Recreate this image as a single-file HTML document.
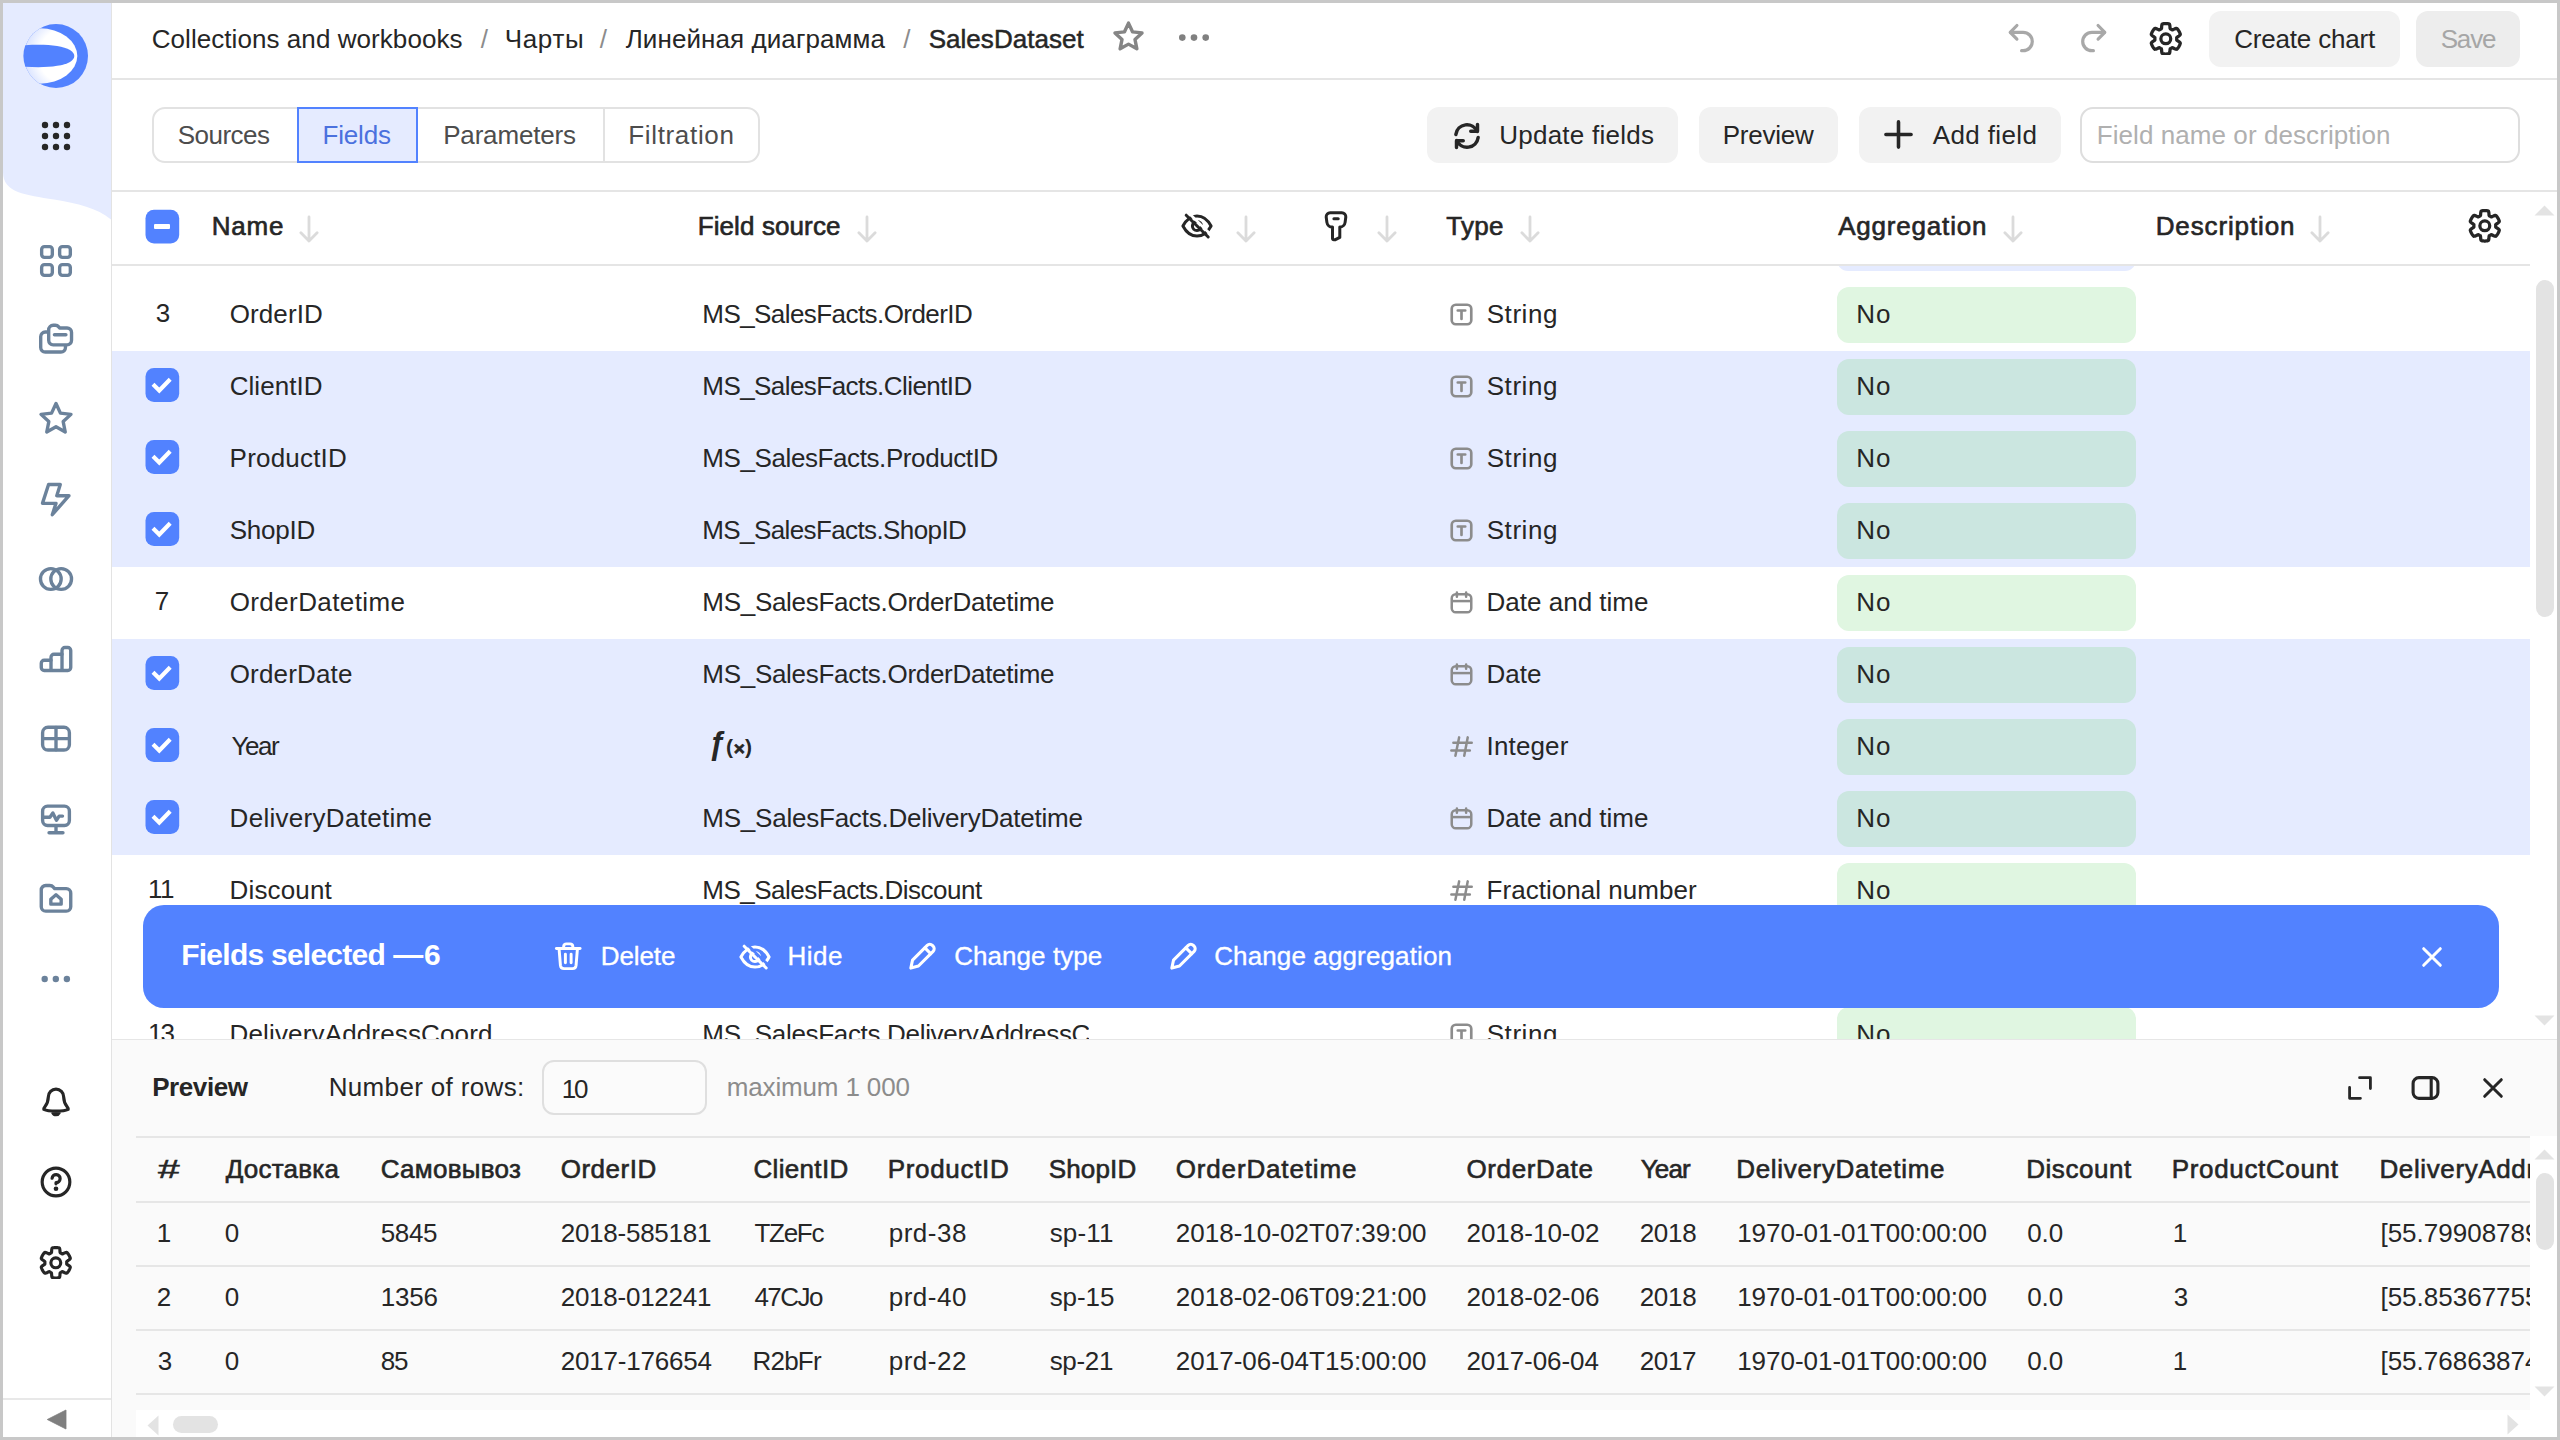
<!DOCTYPE html>
<html lang="en"><head><meta charset="utf-8"><title>SalesDataset</title>
<style>
html,body{margin:0;padding:0;background:#fff;}
body{width:2560px;height:1440px;position:relative;overflow:hidden;font-family:"Liberation Sans","Noto Sans CJK SC",sans-serif;}
#page{position:absolute;left:0;top:0;width:2560px;height:1440px;overflow:hidden;}
#page div,#page span.t{position:absolute;}
span.t{white-space:pre;}
#frame{position:absolute;left:0;top:0;width:2554px;height:1434px;border:3px solid #c8c8c8;pointer-events:none;}
#side{left:0;top:0;width:112px;height:1440px;}
</style></head><body><div id="page">
<div id="side">
<svg style="position:absolute;left:0;top:0" width="112" height="240" viewBox="0 0 112 240"><path d="M3 3 H111 V219.5 C97 208 78 203.5 54 199.5 C26 195 3 193 3 172 Z" fill="#e5ebff"/></svg>
<svg style="position:absolute;left:22px;top:22px" width="68" height="68" viewBox="22 22 68 68">
<defs><radialGradient id="lg" gradientUnits="userSpaceOnUse" cx="66" cy="56" r="44"><stop offset="0.62" stop-color="#ffffff"/><stop offset="1" stop-color="#d4dfff"/></radialGradient>
<clipPath id="lc"><circle cx="56" cy="56" r="32"/></clipPath></defs>
<circle cx="56" cy="56" r="32" fill="#5282ff"/>
<ellipse cx="40" cy="56" rx="37.3" ry="27.7" fill="url(#lg)" clip-path="url(#lc)"/>
<path d="M25.3 45.3 C45 44 62 45.5 70 50 C73 52 74.3 54 74.3 56 C74.3 58 73 60 70 62 C62 66.5 45 68 25.3 66.7 A32 32 0 0 1 25.3 45.3Z" fill="#5282ff"/>
</svg>
<svg style="position:absolute;left:0;top:0" width="112" height="160" fill="#262626"><circle cx="45" cy="125" r="3.2"/><circle cx="45" cy="136" r="3.2"/><circle cx="45" cy="147" r="3.2"/><circle cx="56" cy="125" r="3.2"/><circle cx="56" cy="136" r="3.2"/><circle cx="56" cy="147" r="3.2"/><circle cx="67" cy="125" r="3.2"/><circle cx="67" cy="136" r="3.2"/><circle cx="67" cy="147" r="3.2"/></svg>
<svg style="position:absolute;left:38px;top:242.5px" width="36" height="36" viewBox="0 0 16 16" fill="none" stroke="#6b829b" stroke-width="1.5" stroke-linecap="round" stroke-linejoin="round" ><rect x="1.62" y="1.62" width="4.75" height="4.75" rx="1.25"/><rect x="1.62" y="9.62" width="4.75" height="4.75" rx="1.25"/><rect x="9.62" y="1.62" width="4.75" height="4.75" rx="1.25"/><rect x="9.62" y="9.62" width="4.75" height="4.75" rx="1.25"/></svg>
<svg style="position:absolute;left:38px;top:321px" width="36" height="36" viewBox="0 0 16 16" fill="none" stroke="#6b829b" stroke-width="1.5" stroke-linecap="round" stroke-linejoin="round" ><path d="M4.75 4.3 V3.9 A2 2 0 0 1 6.75 1.9 H7.7 C8.4 1.9 8.8 2.1 9.2 2.6 L9.6 3.1 H12.9 A2 2 0 0 1 14.9 5.1 V8.6 A2 2 0 0 1 12.9 10.6 H6.75 A2 2 0 0 1 4.75 8.6 Z"/><path d="M4.4 4.9 H3.2 A2 2 0 0 0 1.2 6.9 V11.8 A2 2 0 0 0 3.2 13.8 H10.2 A2 2 0 0 0 12.2 11.8 V11"/><path d="M7.3 6.1 H12.4"/></svg>
<svg style="position:absolute;left:38px;top:400px" width="36" height="36" viewBox="0 0 16 16" fill="none" stroke="#6b829b" stroke-width="1.5" stroke-linecap="round" stroke-linejoin="round" ><path d="M8.00,1.55 L9.97,5.84 L14.66,6.39 L11.19,9.59 L12.11,14.21 L8.00,11.90 L3.89,14.21 L4.81,9.59 L1.34,6.39 L6.03,5.84Z"/></svg>
<svg style="position:absolute;left:38px;top:480.5px" width="36" height="36" viewBox="0 0 16 16" fill="none" stroke="#6b829b" stroke-width="1.5" stroke-linecap="round" stroke-linejoin="round" ><path d="M4.7 1.58 H9.9 L8.35 6.55 H13.78 L6.35 14.97 L8 9.94 H1.98 Z"/></svg>
<svg style="position:absolute;left:38px;top:561px" width="36" height="36" viewBox="0 0 16 16" fill="none" stroke="#6b829b" stroke-width="1.5" stroke-linecap="round" stroke-linejoin="round" ><circle cx="5.7" cy="8" r="4.6"/><circle cx="10.3" cy="8" r="4.6"/></svg>
<svg style="position:absolute;left:38px;top:641px" width="36" height="36" viewBox="0 0 16 16" fill="none" stroke="#6b829b" stroke-width="1.5" stroke-linecap="round" stroke-linejoin="round" ><path d="M1.45 9.85 A1.3 1.3 0 0 1 2.75 8.55 H5.78 V7.2 A1.3 1.3 0 0 1 7.08 5.9 H10.67 V4.2 A1.3 1.3 0 0 1 11.97 2.9 H13.25 A1.3 1.3 0 0 1 14.55 4.2 V11.8 A1.3 1.3 0 0 1 13.25 13.1 H2.75 A1.3 1.3 0 0 1 1.45 11.8 Z"/><path d="M5.78 8.55 V13 M10.67 5.9 V13"/></svg>
<svg style="position:absolute;left:38px;top:721px" width="36" height="36" viewBox="0 0 16 16" fill="none" stroke="#6b829b" stroke-width="1.5" stroke-linecap="round" stroke-linejoin="round" ><rect x="2.05" y="2.8" width="11.9" height="10.1" rx="2.4"/><path d="M8 2.9 V12.8 M2.2 7.85 H13.8"/></svg>
<svg style="position:absolute;left:38px;top:801px" width="36" height="36" viewBox="0 0 16 16" fill="none" stroke="#6b829b" stroke-width="1.5" stroke-linecap="round" stroke-linejoin="round" ><rect x="2.05" y="2.3" width="11.9" height="8.6" rx="2.2"/><path d="M8 11 V14 M4.9 14.1 H11.1"/><path d="M2.3 7.2 H5.3 L6.6 5.3 L8.2 8.6 L9.4 6.7 H10.9"/></svg>
<svg style="position:absolute;left:38px;top:880.5px" width="36" height="36" viewBox="0 0 16 16" fill="none" stroke="#6b829b" stroke-width="1.5" stroke-linecap="round" stroke-linejoin="round" ><path d="M1.45 4 A2 2 0 0 1 3.45 2 H5.2 C5.9 2 6.4 2.2 6.8 2.7 L7.4 3.4 H12.55 A2 2 0 0 1 14.55 5.4 V11.4 A2 2 0 0 1 12.55 13.4 H3.45 A2 2 0 0 1 1.45 11.4 Z"/><path d="M5.7 10.3 V8.1 L8 6.1 L10.3 8.1 V10.3 Z"/></svg>
<svg style="position:absolute;left:38px;top:961px" width="36" height="36" viewBox="0 0 36 36" fill="#6b829b"><circle cx="6.7" cy="18" r="3.2"/><circle cx="17.8" cy="18" r="3.2"/><circle cx="28.9" cy="18" r="3.2"/></svg>
<svg style="position:absolute;left:38px;top:1084px" width="36" height="36" viewBox="0 0 16 16" fill="none" stroke="#262626" stroke-width="1.4" stroke-linecap="round" stroke-linejoin="round" color="#262626"><path d="M2.6 11.3 C2.5 10.8 2.8 10.4 3.2 9.9 C4.3 8.5 4.5 7.5 4.6 5.7 A3.4 3.4 0 0 1 11.4 5.7 C11.5 7.5 11.7 8.5 12.8 9.9 C13.2 10.4 13.5 10.8 13.4 11.3 C11.4 12.3 4.6 12.3 2.6 11.3Z"/><path d="M6.3 12.9 A1.9 1.9 0 0 0 9.7 12.9Z" fill="currentColor" stroke-width="0.8"/></svg>
<svg style="position:absolute;left:38px;top:1164.4px" width="36" height="36" viewBox="0 0 16 16" fill="none" stroke="#262626" stroke-width="1.4" stroke-linecap="round" stroke-linejoin="round" color="#262626"><circle cx="8" cy="8" r="6.15"/><path d="M6.25 6.35 A1.8 1.8 0 1 1 8 8.3 V8.8"/><circle cx="8" cy="11" r="0.6" fill="currentColor" stroke-width="0.9"/></svg>
<svg style="position:absolute;left:39.2px;top:1245.7px" width="33.6" height="33.6" viewBox="0 0 16 16" fill="none" stroke="#262626" stroke-width="1.5" stroke-linecap="round" stroke-linejoin="round" ><path d="M8.00,0.75 L8.25,0.75 L8.51,0.77 L8.76,0.79 L9.01,0.82 L9.26,0.86 L9.51,0.91 L9.74,1.04 L9.89,1.42 L9.96,1.95 L9.99,2.52 L10.03,2.98 L10.12,3.24 L10.28,3.33 L10.44,3.41 L10.60,3.50 L10.76,3.59 L10.91,3.69 L11.06,3.79 L11.33,3.74 L11.75,3.53 L12.25,3.27 L12.76,3.07 L13.16,3.02 L13.39,3.15 L13.55,3.34 L13.71,3.54 L13.87,3.74 L14.01,3.95 L14.15,4.16 L14.28,4.38 L14.40,4.60 L14.52,4.82 L14.62,5.05 L14.72,5.28 L14.81,5.52 L14.90,5.76 L14.89,6.02 L14.65,6.34 L14.22,6.68 L13.74,6.99 L13.36,7.25 L13.18,7.46 L13.19,7.64 L13.20,7.82 L13.20,8.00 L13.20,8.18 L13.19,8.36 L13.18,8.54 L13.36,8.75 L13.74,9.01 L14.22,9.32 L14.65,9.66 L14.89,9.98 L14.90,10.24 L14.81,10.48 L14.72,10.72 L14.62,10.95 L14.52,11.18 L14.40,11.40 L14.28,11.62 L14.15,11.84 L14.01,12.05 L13.87,12.26 L13.71,12.46 L13.55,12.66 L13.39,12.85 L13.16,12.98 L12.76,12.93 L12.25,12.73 L11.75,12.47 L11.33,12.26 L11.06,12.21 L10.91,12.31 L10.76,12.41 L10.60,12.50 L10.44,12.59 L10.28,12.67 L10.12,12.76 L10.03,13.02 L9.99,13.48 L9.96,14.05 L9.89,14.58 L9.74,14.96 L9.51,15.09 L9.26,15.14 L9.01,15.18 L8.76,15.21 L8.51,15.23 L8.25,15.25 L8.00,15.25 L7.75,15.25 L7.49,15.23 L7.24,15.21 L6.99,15.18 L6.74,15.14 L6.49,15.09 L6.26,14.96 L6.11,14.58 L6.04,14.05 L6.01,13.48 L5.97,13.02 L5.88,12.76 L5.72,12.67 L5.56,12.59 L5.40,12.50 L5.24,12.41 L5.09,12.31 L4.94,12.21 L4.67,12.26 L4.25,12.47 L3.75,12.73 L3.24,12.93 L2.84,12.98 L2.61,12.85 L2.45,12.66 L2.29,12.46 L2.13,12.26 L1.99,12.05 L1.85,11.84 L1.72,11.62 L1.60,11.40 L1.48,11.18 L1.38,10.95 L1.28,10.72 L1.19,10.48 L1.10,10.24 L1.11,9.98 L1.35,9.66 L1.78,9.32 L2.26,9.01 L2.64,8.75 L2.82,8.54 L2.81,8.36 L2.80,8.18 L2.80,8.00 L2.80,7.82 L2.81,7.64 L2.82,7.46 L2.64,7.25 L2.26,6.99 L1.78,6.68 L1.35,6.34 L1.11,6.02 L1.10,5.76 L1.19,5.52 L1.28,5.28 L1.38,5.05 L1.48,4.82 L1.60,4.60 L1.72,4.37 L1.85,4.16 L1.99,3.95 L2.13,3.74 L2.29,3.54 L2.45,3.34 L2.61,3.15 L2.84,3.02 L3.24,3.07 L3.75,3.27 L4.25,3.53 L4.67,3.74 L4.94,3.79 L5.09,3.69 L5.24,3.59 L5.40,3.50 L5.56,3.41 L5.72,3.33 L5.88,3.24 L5.97,2.98 L6.01,2.52 L6.04,1.95 L6.11,1.42 L6.26,1.04 L6.49,0.91 L6.74,0.86 L6.99,0.82 L7.24,0.79 L7.49,0.77 L7.75,0.75Z"/><circle cx="8" cy="8" r="2.35"/></svg>
<div style="left:3px;top:1398px;width:108px;height:2px;background:#e8e8e8;"></div>
<svg style="position:absolute;left:46px;top:1408px" width="22" height="24" viewBox="46 1408 22 24"><path d="M66 1410 V1429 L47.3 1419.5 Z" fill="#7f7f7f" stroke="#7f7f7f" stroke-width="0.8" stroke-linejoin="round"/></svg>
</div>
<div style="left:110.5px;top:3px;width:1.5px;height:1434px;background:rgba(0,0,0,0.11);"></div>
<span class="t" style="left:151.70px;top:25.99px;font-size:26px;line-height:26px;color:#262626;letter-spacing:0.064px;">Collections and workbooks</span>
<span class="t" style="left:480.70px;top:25.99px;font-size:26px;line-height:26px;color:#8c8c8c;">/</span>
<span class="t" style="left:504.70px;top:25.99px;font-size:26px;line-height:26px;color:#262626;letter-spacing:0.679px;">Чарты</span>
<span class="t" style="left:599.70px;top:25.99px;font-size:26px;line-height:26px;color:#8c8c8c;">/</span>
<span class="t" style="left:625.70px;top:25.99px;font-size:26px;line-height:26px;color:#262626;letter-spacing:0.085px;">Линейная диаграмма</span>
<span class="t" style="left:903.20px;top:25.99px;font-size:26px;line-height:26px;color:#8c8c8c;">/</span>
<span class="t" style="left:928.70px;top:25.99px;font-size:26px;line-height:26px;color:#262626;letter-spacing:0.035px;-webkit-text-stroke:0.5px #262626;">SalesDataset</span>
<svg style="position:absolute;left:1111.5px;top:19.5px" width="33" height="33" viewBox="0 0 16 16" fill="none" stroke="#858585" stroke-width="1.65" stroke-linecap="round" stroke-linejoin="round" ><path d="M8.00,1.50 L9.94,5.73 L14.56,6.27 L11.14,9.42 L12.06,13.98 L8.00,11.70 L3.94,13.98 L4.86,9.42 L1.44,6.27 L6.06,5.73Z"/></svg>
<svg style="position:absolute;left:1177px;top:30px" width="36" height="16" fill="#808080"><circle cx="5.3" cy="7.6" r="3.3"/><circle cx="17" cy="7.6" r="3.3"/><circle cx="28.7" cy="7.6" r="3.3"/></svg>
<svg style="position:absolute;left:2005px;top:22px" width="32" height="32" viewBox="0 0 16 16" fill="none" stroke="#a8a8a8" stroke-width="1.6" stroke-linecap="round" stroke-linejoin="round" ><path d="M5.95 1.75 L2.6 5.15 L5.95 8.55"/><path d="M2.8 5.15 H9.05 a4.6 4.6 0 0 1 0 9.2 H8.3"/></svg>
<svg style="position:absolute;left:2077.5px;top:22px" width="32" height="32" viewBox="0 0 16 16" fill="none" stroke="#a8a8a8" stroke-width="1.6" stroke-linecap="round" stroke-linejoin="round" ><path d="M10.05 1.75 L13.4 5.15 L10.05 8.55"/><path d="M13.2 5.15 H6.95 a4.6 4.6 0 0 0 0 9.2 H7.7"/></svg>
<svg style="position:absolute;left:2148.5px;top:21.9px" width="33.6" height="33.6" viewBox="0 0 16 16" fill="none" stroke="#262626" stroke-width="1.55" stroke-linecap="round" stroke-linejoin="round" ><path d="M8.00,0.75 L8.25,0.75 L8.51,0.77 L8.76,0.79 L9.01,0.82 L9.26,0.86 L9.51,0.91 L9.74,1.04 L9.89,1.42 L9.96,1.95 L9.99,2.52 L10.03,2.98 L10.12,3.24 L10.28,3.33 L10.44,3.41 L10.60,3.50 L10.76,3.59 L10.91,3.69 L11.06,3.79 L11.33,3.74 L11.75,3.53 L12.25,3.27 L12.76,3.07 L13.16,3.02 L13.39,3.15 L13.55,3.34 L13.71,3.54 L13.87,3.74 L14.01,3.95 L14.15,4.16 L14.28,4.38 L14.40,4.60 L14.52,4.82 L14.62,5.05 L14.72,5.28 L14.81,5.52 L14.90,5.76 L14.89,6.02 L14.65,6.34 L14.22,6.68 L13.74,6.99 L13.36,7.25 L13.18,7.46 L13.19,7.64 L13.20,7.82 L13.20,8.00 L13.20,8.18 L13.19,8.36 L13.18,8.54 L13.36,8.75 L13.74,9.01 L14.22,9.32 L14.65,9.66 L14.89,9.98 L14.90,10.24 L14.81,10.48 L14.72,10.72 L14.62,10.95 L14.52,11.18 L14.40,11.40 L14.28,11.62 L14.15,11.84 L14.01,12.05 L13.87,12.26 L13.71,12.46 L13.55,12.66 L13.39,12.85 L13.16,12.98 L12.76,12.93 L12.25,12.73 L11.75,12.47 L11.33,12.26 L11.06,12.21 L10.91,12.31 L10.76,12.41 L10.60,12.50 L10.44,12.59 L10.28,12.67 L10.12,12.76 L10.03,13.02 L9.99,13.48 L9.96,14.05 L9.89,14.58 L9.74,14.96 L9.51,15.09 L9.26,15.14 L9.01,15.18 L8.76,15.21 L8.51,15.23 L8.25,15.25 L8.00,15.25 L7.75,15.25 L7.49,15.23 L7.24,15.21 L6.99,15.18 L6.74,15.14 L6.49,15.09 L6.26,14.96 L6.11,14.58 L6.04,14.05 L6.01,13.48 L5.97,13.02 L5.88,12.76 L5.72,12.67 L5.56,12.59 L5.40,12.50 L5.24,12.41 L5.09,12.31 L4.94,12.21 L4.67,12.26 L4.25,12.47 L3.75,12.73 L3.24,12.93 L2.84,12.98 L2.61,12.85 L2.45,12.66 L2.29,12.46 L2.13,12.26 L1.99,12.05 L1.85,11.84 L1.72,11.62 L1.60,11.40 L1.48,11.18 L1.38,10.95 L1.28,10.72 L1.19,10.48 L1.10,10.24 L1.11,9.98 L1.35,9.66 L1.78,9.32 L2.26,9.01 L2.64,8.75 L2.82,8.54 L2.81,8.36 L2.80,8.18 L2.80,8.00 L2.80,7.82 L2.81,7.64 L2.82,7.46 L2.64,7.25 L2.26,6.99 L1.78,6.68 L1.35,6.34 L1.11,6.02 L1.10,5.76 L1.19,5.52 L1.28,5.28 L1.38,5.05 L1.48,4.82 L1.60,4.60 L1.72,4.37 L1.85,4.16 L1.99,3.95 L2.13,3.74 L2.29,3.54 L2.45,3.34 L2.61,3.15 L2.84,3.02 L3.24,3.07 L3.75,3.27 L4.25,3.53 L4.67,3.74 L4.94,3.79 L5.09,3.69 L5.24,3.59 L5.40,3.50 L5.56,3.41 L5.72,3.33 L5.88,3.24 L5.97,2.98 L6.01,2.52 L6.04,1.95 L6.11,1.42 L6.26,1.04 L6.49,0.91 L6.74,0.86 L6.99,0.82 L7.24,0.79 L7.49,0.77 L7.75,0.75Z"/><circle cx="8" cy="8" r="2.35"/></svg>
<div style="left:2209px;top:11px;width:191px;height:56px;background:#f2f2f2;border-radius:12px;"></div>
<span class="t" style="left:2234.20px;top:25.99px;font-size:26px;line-height:26px;color:#262626;letter-spacing:-0.185px;">Create chart</span>
<div style="left:2416px;top:11px;width:104px;height:56px;background:#ededed;border-radius:12px;"></div>
<span class="t" style="left:2440.70px;top:25.99px;font-size:26px;line-height:26px;color:#a6a6a6;letter-spacing:-1.167px;">Save</span>
<div style="left:112px;top:78px;width:2445px;height:2px;background:#e5e5e5;"></div>
<div style="left:152px;top:107px;width:608px;height:56px;border:2px solid #e2e2e2;border-radius:13px;box-sizing:border-box"></div>
<div style="left:416px;top:109px;width:2px;height:52px;background:#e2e2e2;"></div>
<div style="left:603px;top:109px;width:2px;height:52px;background:#e2e2e2;"></div>
<div style="left:297px;top:107px;width:121px;height:56px;border:2px solid #5282ff;background:#e5ebff;box-sizing:border-box"></div>
<span class="t" style="left:177.70px;top:121.99px;font-size:26px;line-height:26px;color:#4d4d4d;letter-spacing:-0.513px;">Sources</span>
<span class="t" style="left:322.45px;top:121.99px;font-size:26px;line-height:26px;color:#4b71de;letter-spacing:-0.161px;">Fields</span>
<span class="t" style="left:443.20px;top:121.99px;font-size:26px;line-height:26px;color:#4d4d4d;letter-spacing:-0.176px;">Parameters</span>
<span class="t" style="left:628.20px;top:121.99px;font-size:26px;line-height:26px;color:#4d4d4d;letter-spacing:0.674px;">Filtration</span>
<div style="left:1427px;top:107px;width:251px;height:56px;background:#f2f2f2;border-radius:12px;"></div>
<svg style="position:absolute;left:1452.1px;top:120.8px" width="30" height="30" viewBox="0 0 16 16" fill="none" stroke="#262626" stroke-width="1.85" stroke-linecap="round" stroke-linejoin="round" ><path d="M2.05 7.2 A6 6 0 0 1 13.5 5.6"/><path d="M13.6 1.9 V5.5 H10"/><path d="M13.95 8.8 A6 6 0 0 1 2.5 10.4"/><path d="M2.4 14.1 V10.5 H6"/></svg>
<span class="t" style="left:1499.20px;top:121.99px;font-size:26px;line-height:26px;color:#262626;letter-spacing:0.253px;">Update fields</span>
<div style="left:1699px;top:107px;width:139px;height:56px;background:#f2f2f2;border-radius:12px;"></div>
<span class="t" style="left:1722.70px;top:121.99px;font-size:26px;line-height:26px;color:#262626;letter-spacing:-0.233px;">Preview</span>
<div style="left:1859px;top:107px;width:202px;height:56px;background:#f2f2f2;border-radius:12px;"></div>
<svg style="position:absolute;left:1882.5px;top:119.1px" width="31" height="31" viewBox="0 0 16 16" fill="none" stroke="#262626" stroke-width="1.85" stroke-linecap="round" stroke-linejoin="round" ><path d="M8 1.5 V14.5 M1.5 8 H14.5"/></svg>
<span class="t" style="left:1932.70px;top:121.99px;font-size:26px;line-height:26px;color:#262626;letter-spacing:0.385px;">Add field</span>
<div style="left:2080px;top:107px;width:440px;height:56px;border:2px solid #dedede;border-radius:13px;box-sizing:border-box"></div>
<span class="t" style="left:2096.70px;top:121.99px;font-size:26px;line-height:26px;color:#b0b0b0;letter-spacing:0.077px;">Field name or description</span>
<div style="left:112px;top:190px;width:2445px;height:2px;background:#e5e5e5;"></div>
<svg style="position:absolute;left:145px;top:208px" width="36" height="36" viewBox="0 0 36 36"><rect x="0.5" y="1.7" width="33.7" height="33.8" rx="8.5" fill="#5282ff"/></svg>
<div style="left:154px;top:223.5px;width:16px;height:5px;background:#fff;border-radius:1px;"></div>
<span class="t" style="left:211.70px;top:212.99px;font-size:26px;line-height:26px;color:#262626;letter-spacing:0.802px;-webkit-text-stroke:0.65px #262626;">Name</span>
<svg style="position:absolute;left:299px;top:215px" width="20" height="29" viewBox="0 0 20 29" fill="none" stroke="#dbdbdb" stroke-width="2.8" stroke-linecap="round" stroke-linejoin="round"><path d="M10 2 V26 M1.9 17.8 L10 26 L18.1 17.8"/></svg>
<span class="t" style="left:697.70px;top:212.99px;font-size:26px;line-height:26px;color:#262626;letter-spacing:0.104px;-webkit-text-stroke:0.65px #262626;">Field source</span>
<svg style="position:absolute;left:857px;top:215px" width="20" height="29" viewBox="0 0 20 29" fill="none" stroke="#dbdbdb" stroke-width="2.8" stroke-linecap="round" stroke-linejoin="round"><path d="M10 2 V26 M1.9 17.8 L10 26 L18.1 17.8"/></svg>
<svg style="position:absolute;left:1180.5px;top:209.7px" width="32" height="32" viewBox="0 0 16 16" fill="none" stroke="#262626" stroke-width="1.5" stroke-linecap="round" stroke-linejoin="round" ><path d="M0.95 8 C2.7 4.7 5.2 2.95 8 2.95 C10.8 2.95 13.3 4.7 15.05 8 C13.3 11.3 10.8 13.05 8 13.05 C5.2 13.05 2.7 11.3 0.95 8Z"/><circle cx="8" cy="8" r="2.3"/><path d="M4.0 1.6 L15.0 12.4" stroke="#fff" stroke-width="1.35" stroke-linecap="butt"/><path d="M2.6 2.6 L13.6 13.5"/></svg>
<svg style="position:absolute;left:1236px;top:215px" width="20" height="29" viewBox="0 0 20 29" fill="none" stroke="#dbdbdb" stroke-width="2.8" stroke-linecap="round" stroke-linejoin="round"><path d="M10 2 V26 M1.9 17.8 L10 26 L18.1 17.8"/></svg>
<svg style="position:absolute;left:1320px;top:209.5px" width="32" height="32" viewBox="0 0 16 16" fill="none" stroke="#262626" stroke-width="1.5" stroke-linecap="round" stroke-linejoin="round" ><path d="M5.1 1.35 H10.9 A2 2 0 0 1 12.9 3.5 L12.55 6.2 A2.7 2.7 0 0 1 9.9 8.55 V13.7 L7.7 14.85 H6.9 A0.65 0.65 0 0 1 6.25 14.2 V8.55 A2.7 2.7 0 0 1 3.45 6.2 L3.1 3.5 A2 2 0 0 1 5.1 1.35Z"/><path d="M6.95 4.35 H9.1"/></svg>
<svg style="position:absolute;left:1377px;top:215px" width="20" height="29" viewBox="0 0 20 29" fill="none" stroke="#dbdbdb" stroke-width="2.8" stroke-linecap="round" stroke-linejoin="round"><path d="M10 2 V26 M1.9 17.8 L10 26 L18.1 17.8"/></svg>
<span class="t" style="left:1446.20px;top:212.99px;font-size:26px;line-height:26px;color:#262626;letter-spacing:0.298px;-webkit-text-stroke:0.65px #262626;">Type</span>
<svg style="position:absolute;left:1519.5px;top:215px" width="20" height="29" viewBox="0 0 20 29" fill="none" stroke="#dbdbdb" stroke-width="2.8" stroke-linecap="round" stroke-linejoin="round"><path d="M10 2 V26 M1.9 17.8 L10 26 L18.1 17.8"/></svg>
<span class="t" style="left:1838.20px;top:212.99px;font-size:26px;line-height:26px;color:#262626;letter-spacing:0.804px;-webkit-text-stroke:0.65px #262626;">Aggregation</span>
<svg style="position:absolute;left:2003px;top:215px" width="20" height="29" viewBox="0 0 20 29" fill="none" stroke="#dbdbdb" stroke-width="2.8" stroke-linecap="round" stroke-linejoin="round"><path d="M10 2 V26 M1.9 17.8 L10 26 L18.1 17.8"/></svg>
<span class="t" style="left:2155.70px;top:212.99px;font-size:26px;line-height:26px;color:#262626;letter-spacing:0.871px;-webkit-text-stroke:0.65px #262626;">Description</span>
<svg style="position:absolute;left:2310px;top:215px" width="20" height="29" viewBox="0 0 20 29" fill="none" stroke="#dbdbdb" stroke-width="2.8" stroke-linecap="round" stroke-linejoin="round"><path d="M10 2 V26 M1.9 17.8 L10 26 L18.1 17.8"/></svg>
<svg style="position:absolute;left:2468.2px;top:209.45px" width="33.6" height="33.6" viewBox="0 0 16 16" fill="none" stroke="#262626" stroke-width="1.55" stroke-linecap="round" stroke-linejoin="round" ><path d="M8.00,0.75 L8.25,0.75 L8.51,0.77 L8.76,0.79 L9.01,0.82 L9.26,0.86 L9.51,0.91 L9.74,1.04 L9.89,1.42 L9.96,1.95 L9.99,2.52 L10.03,2.98 L10.12,3.24 L10.28,3.33 L10.44,3.41 L10.60,3.50 L10.76,3.59 L10.91,3.69 L11.06,3.79 L11.33,3.74 L11.75,3.53 L12.25,3.27 L12.76,3.07 L13.16,3.02 L13.39,3.15 L13.55,3.34 L13.71,3.54 L13.87,3.74 L14.01,3.95 L14.15,4.16 L14.28,4.38 L14.40,4.60 L14.52,4.82 L14.62,5.05 L14.72,5.28 L14.81,5.52 L14.90,5.76 L14.89,6.02 L14.65,6.34 L14.22,6.68 L13.74,6.99 L13.36,7.25 L13.18,7.46 L13.19,7.64 L13.20,7.82 L13.20,8.00 L13.20,8.18 L13.19,8.36 L13.18,8.54 L13.36,8.75 L13.74,9.01 L14.22,9.32 L14.65,9.66 L14.89,9.98 L14.90,10.24 L14.81,10.48 L14.72,10.72 L14.62,10.95 L14.52,11.18 L14.40,11.40 L14.28,11.62 L14.15,11.84 L14.01,12.05 L13.87,12.26 L13.71,12.46 L13.55,12.66 L13.39,12.85 L13.16,12.98 L12.76,12.93 L12.25,12.73 L11.75,12.47 L11.33,12.26 L11.06,12.21 L10.91,12.31 L10.76,12.41 L10.60,12.50 L10.44,12.59 L10.28,12.67 L10.12,12.76 L10.03,13.02 L9.99,13.48 L9.96,14.05 L9.89,14.58 L9.74,14.96 L9.51,15.09 L9.26,15.14 L9.01,15.18 L8.76,15.21 L8.51,15.23 L8.25,15.25 L8.00,15.25 L7.75,15.25 L7.49,15.23 L7.24,15.21 L6.99,15.18 L6.74,15.14 L6.49,15.09 L6.26,14.96 L6.11,14.58 L6.04,14.05 L6.01,13.48 L5.97,13.02 L5.88,12.76 L5.72,12.67 L5.56,12.59 L5.40,12.50 L5.24,12.41 L5.09,12.31 L4.94,12.21 L4.67,12.26 L4.25,12.47 L3.75,12.73 L3.24,12.93 L2.84,12.98 L2.61,12.85 L2.45,12.66 L2.29,12.46 L2.13,12.26 L1.99,12.05 L1.85,11.84 L1.72,11.62 L1.60,11.40 L1.48,11.18 L1.38,10.95 L1.28,10.72 L1.19,10.48 L1.10,10.24 L1.11,9.98 L1.35,9.66 L1.78,9.32 L2.26,9.01 L2.64,8.75 L2.82,8.54 L2.81,8.36 L2.80,8.18 L2.80,8.00 L2.80,7.82 L2.81,7.64 L2.82,7.46 L2.64,7.25 L2.26,6.99 L1.78,6.68 L1.35,6.34 L1.11,6.02 L1.10,5.76 L1.19,5.52 L1.28,5.28 L1.38,5.05 L1.48,4.82 L1.60,4.60 L1.72,4.37 L1.85,4.16 L1.99,3.95 L2.13,3.74 L2.29,3.54 L2.45,3.34 L2.61,3.15 L2.84,3.02 L3.24,3.07 L3.75,3.27 L4.25,3.53 L4.67,3.74 L4.94,3.79 L5.09,3.69 L5.24,3.59 L5.40,3.50 L5.56,3.41 L5.72,3.33 L5.88,3.24 L5.97,2.98 L6.01,2.52 L6.04,1.95 L6.11,1.42 L6.26,1.04 L6.49,0.91 L6.74,0.86 L6.99,0.82 L7.24,0.79 L7.49,0.77 L7.75,0.75Z"/><circle cx="8" cy="8" r="2.35"/></svg>
<div id="tbody" style="left:112px;top:266px;width:2418px;height:773px;overflow:hidden">
<div style="left:1725px;top:-51px;width:299px;height:55.5px;background:#e5ebff;border-radius:11px;"></div>
<span class="t" style="left:43.70px;top:33.99px;font-size:26px;line-height:26px;color:#262626;">3</span>
<span class="t" style="left:117.70px;top:34.99px;font-size:26px;line-height:26px;color:#262626;letter-spacing:0.103px;">OrderID</span>
<span class="t" style="left:590.30px;top:34.99px;font-size:26px;line-height:26px;color:#262626;letter-spacing:-0.564px;">MS_SalesFacts.OrderID</span>
<svg style="position:absolute;left:1337.1px;top:35.60000000000002px" width="25" height="25" viewBox="0 0 16 16" fill="none" stroke="#8c8c8c" stroke-width="1.7" stroke-linecap="round" stroke-linejoin="round" ><rect x="1.75" y="1.75" width="12.5" height="12.5" rx="2.6"/><path d="M5.6 5.45 H10.4 M8 5.6 V10.9"/></svg>
<span class="t" style="left:1374.70px;top:34.99px;font-size:26px;line-height:26px;color:#262626;letter-spacing:0.568px;">String</span>
<div style="left:1725px;top:21px;width:299px;height:55.5px;background:#e0f6e1;border-radius:12px;"></div>
<span class="t" style="left:1744.20px;top:34.99px;font-size:26px;line-height:26px;color:#262626;letter-spacing:1.024px;">No</span>
<div style="left:0px;top:85px;width:2418px;height:72px;background:#e5ebff;"></div>
<svg style="position:absolute;left:33px;top:101px" width="36" height="36" viewBox="0 0 36 36"><rect x="0.5" y="1.1" width="33.7" height="34" rx="8.5" fill="#5282ff"/><path d="M8 17.2 L14.3 23.5 L25.2 12.3" fill="none" stroke="#fff" stroke-width="4.1" stroke-linecap="butt" stroke-linejoin="miter"/></svg>
<span class="t" style="left:117.70px;top:106.99px;font-size:26px;line-height:26px;color:#262626;letter-spacing:0.051px;">ClientID</span>
<span class="t" style="left:590.30px;top:106.99px;font-size:26px;line-height:26px;color:#262626;letter-spacing:-0.561px;">MS_SalesFacts.ClientID</span>
<svg style="position:absolute;left:1337.1px;top:107.60000000000002px" width="25" height="25" viewBox="0 0 16 16" fill="none" stroke="#8c8c8c" stroke-width="1.7" stroke-linecap="round" stroke-linejoin="round" ><rect x="1.75" y="1.75" width="12.5" height="12.5" rx="2.6"/><path d="M5.6 5.45 H10.4 M8 5.6 V10.9"/></svg>
<span class="t" style="left:1374.70px;top:106.99px;font-size:26px;line-height:26px;color:#262626;letter-spacing:0.568px;">String</span>
<div style="left:1725px;top:93px;width:299px;height:55.5px;background:#cbe6e0;border-radius:12px;"></div>
<span class="t" style="left:1744.20px;top:106.99px;font-size:26px;line-height:26px;color:#262626;letter-spacing:1.024px;">No</span>
<div style="left:0px;top:157px;width:2418px;height:72px;background:#e5ebff;"></div>
<svg style="position:absolute;left:33px;top:173px" width="36" height="36" viewBox="0 0 36 36"><rect x="0.5" y="1.1" width="33.7" height="34" rx="8.5" fill="#5282ff"/><path d="M8 17.2 L14.3 23.5 L25.2 12.3" fill="none" stroke="#fff" stroke-width="4.1" stroke-linecap="butt" stroke-linejoin="miter"/></svg>
<span class="t" style="left:117.60px;top:178.99px;font-size:26px;line-height:26px;color:#262626;letter-spacing:0.197px;">ProductID</span>
<span class="t" style="left:590.30px;top:178.99px;font-size:26px;line-height:26px;color:#262626;letter-spacing:-0.405px;">MS_SalesFacts.ProductID</span>
<svg style="position:absolute;left:1337.1px;top:179.60000000000002px" width="25" height="25" viewBox="0 0 16 16" fill="none" stroke="#8c8c8c" stroke-width="1.7" stroke-linecap="round" stroke-linejoin="round" ><rect x="1.75" y="1.75" width="12.5" height="12.5" rx="2.6"/><path d="M5.6 5.45 H10.4 M8 5.6 V10.9"/></svg>
<span class="t" style="left:1374.70px;top:178.99px;font-size:26px;line-height:26px;color:#262626;letter-spacing:0.568px;">String</span>
<div style="left:1725px;top:165px;width:299px;height:55.5px;background:#cbe6e0;border-radius:12px;"></div>
<span class="t" style="left:1744.20px;top:178.99px;font-size:26px;line-height:26px;color:#262626;letter-spacing:1.024px;">No</span>
<div style="left:0px;top:229px;width:2418px;height:72px;background:#e5ebff;"></div>
<svg style="position:absolute;left:33px;top:245px" width="36" height="36" viewBox="0 0 36 36"><rect x="0.5" y="1.1" width="33.7" height="34" rx="8.5" fill="#5282ff"/><path d="M8 17.2 L14.3 23.5 L25.2 12.3" fill="none" stroke="#fff" stroke-width="4.1" stroke-linecap="butt" stroke-linejoin="miter"/></svg>
<span class="t" style="left:117.70px;top:250.99px;font-size:26px;line-height:26px;color:#262626;letter-spacing:-0.229px;">ShopID</span>
<span class="t" style="left:590.30px;top:250.99px;font-size:26px;line-height:26px;color:#262626;letter-spacing:-0.607px;">MS_SalesFacts.ShopID</span>
<svg style="position:absolute;left:1337.1px;top:251.60000000000002px" width="25" height="25" viewBox="0 0 16 16" fill="none" stroke="#8c8c8c" stroke-width="1.7" stroke-linecap="round" stroke-linejoin="round" ><rect x="1.75" y="1.75" width="12.5" height="12.5" rx="2.6"/><path d="M5.6 5.45 H10.4 M8 5.6 V10.9"/></svg>
<span class="t" style="left:1374.70px;top:250.99px;font-size:26px;line-height:26px;color:#262626;letter-spacing:0.568px;">String</span>
<div style="left:1725px;top:237px;width:299px;height:55.5px;background:#cbe6e0;border-radius:12px;"></div>
<span class="t" style="left:1744.20px;top:250.99px;font-size:26px;line-height:26px;color:#262626;letter-spacing:1.024px;">No</span>
<span class="t" style="left:42.70px;top:321.99px;font-size:26px;line-height:26px;color:#262626;">7</span>
<span class="t" style="left:117.70px;top:322.99px;font-size:26px;line-height:26px;color:#262626;letter-spacing:0.397px;">OrderDatetime</span>
<span class="t" style="left:590.30px;top:322.99px;font-size:26px;line-height:26px;color:#262626;letter-spacing:-0.293px;">MS_SalesFacts.OrderDatetime</span>
<svg style="position:absolute;left:1337.1px;top:323.6px" width="25" height="25" viewBox="0 0 16 16" fill="none" stroke="#8c8c8c" stroke-width="1.6" stroke-linecap="round" stroke-linejoin="round" ><rect x="1.75" y="2.75" width="12.5" height="11.5" rx="2.6"/><path d="M1.9 7.1 H14.1" stroke-linecap="butt"/><path d="M5.05 1.55 V4.3 M10.95 1.55 V4.3"/></svg>
<span class="t" style="left:1374.60px;top:322.99px;font-size:26px;line-height:26px;color:#262626;">Date and time</span>
<div style="left:1725px;top:309px;width:299px;height:55.5px;background:#e0f6e1;border-radius:12px;"></div>
<span class="t" style="left:1744.20px;top:322.99px;font-size:26px;line-height:26px;color:#262626;letter-spacing:1.024px;">No</span>
<div style="left:0px;top:373px;width:2418px;height:72px;background:#e5ebff;"></div>
<svg style="position:absolute;left:33px;top:389px" width="36" height="36" viewBox="0 0 36 36"><rect x="0.5" y="1.1" width="33.7" height="34" rx="8.5" fill="#5282ff"/><path d="M8 17.2 L14.3 23.5 L25.2 12.3" fill="none" stroke="#fff" stroke-width="4.1" stroke-linecap="butt" stroke-linejoin="miter"/></svg>
<span class="t" style="left:117.70px;top:394.99px;font-size:26px;line-height:26px;color:#262626;letter-spacing:0.173px;">OrderDate</span>
<span class="t" style="left:590.30px;top:394.99px;font-size:26px;line-height:26px;color:#262626;letter-spacing:-0.293px;">MS_SalesFacts.OrderDatetime</span>
<svg style="position:absolute;left:1337.1px;top:395.6px" width="25" height="25" viewBox="0 0 16 16" fill="none" stroke="#8c8c8c" stroke-width="1.6" stroke-linecap="round" stroke-linejoin="round" ><rect x="1.75" y="2.75" width="12.5" height="11.5" rx="2.6"/><path d="M1.9 7.1 H14.1" stroke-linecap="butt"/><path d="M5.05 1.55 V4.3 M10.95 1.55 V4.3"/></svg>
<span class="t" style="left:1374.60px;top:394.99px;font-size:26px;line-height:26px;color:#262626;letter-spacing:-0.020px;">Date</span>
<div style="left:1725px;top:381px;width:299px;height:55.5px;background:#cbe6e0;border-radius:12px;"></div>
<span class="t" style="left:1744.20px;top:394.99px;font-size:26px;line-height:26px;color:#262626;letter-spacing:1.024px;">No</span>
<div style="left:0px;top:445px;width:2418px;height:72px;background:#e5ebff;"></div>
<svg style="position:absolute;left:33px;top:461px" width="36" height="36" viewBox="0 0 36 36"><rect x="0.5" y="1.1" width="33.7" height="34" rx="8.5" fill="#5282ff"/><path d="M8 17.2 L14.3 23.5 L25.2 12.3" fill="none" stroke="#fff" stroke-width="4.1" stroke-linecap="butt" stroke-linejoin="miter"/></svg>
<span class="t" style="left:119.60px;top:466.99px;font-size:26px;line-height:26px;color:#262626;letter-spacing:-1.492px;">Year</span>
<span class="t" style="left:596.30px;top:462.06px;font-size:31px;line-height:31px;color:#262626;font-weight:700;font-style:italic;">ƒ</span>
<span class="t" style="left:614.10px;top:469.52px;font-size:21px;line-height:21px;color:#262626;font-weight:700;">(</span>
<span class="t" style="left:621.70px;top:473.12px;font-size:19px;line-height:19px;color:#262626;font-weight:700;-webkit-text-stroke:0.7px #262626;">×</span>
<span class="t" style="left:632.90px;top:469.52px;font-size:21px;line-height:21px;color:#262626;font-weight:700;">)</span>
<svg style="position:absolute;left:1337px;top:468px" width="25" height="25" viewBox="0 0 16 16" fill="none" stroke="#8c8c8c" stroke-width="1.6" stroke-linecap="round" stroke-linejoin="round" ><path d="M6.5 2.15 L4.1 13.9 M12 2.15 L9.75 13.9 M2.8 5.57 H14.55 M1.5 10.6 H13.35"/></svg>
<span class="t" style="left:1374.60px;top:466.99px;font-size:26px;line-height:26px;color:#262626;letter-spacing:0.135px;">Integer</span>
<div style="left:1725px;top:453px;width:299px;height:55.5px;background:#cbe6e0;border-radius:12px;"></div>
<span class="t" style="left:1744.20px;top:466.99px;font-size:26px;line-height:26px;color:#262626;letter-spacing:1.024px;">No</span>
<div style="left:0px;top:517px;width:2418px;height:72px;background:#e5ebff;"></div>
<svg style="position:absolute;left:33px;top:533px" width="36" height="36" viewBox="0 0 36 36"><rect x="0.5" y="1.1" width="33.7" height="34" rx="8.5" fill="#5282ff"/><path d="M8 17.2 L14.3 23.5 L25.2 12.3" fill="none" stroke="#fff" stroke-width="4.1" stroke-linecap="butt" stroke-linejoin="miter"/></svg>
<span class="t" style="left:117.60px;top:538.99px;font-size:26px;line-height:26px;color:#262626;letter-spacing:0.294px;">DeliveryDatetime</span>
<span class="t" style="left:590.30px;top:538.99px;font-size:26px;line-height:26px;color:#262626;letter-spacing:-0.227px;">MS_SalesFacts.DeliveryDatetime</span>
<svg style="position:absolute;left:1337.1px;top:539.6px" width="25" height="25" viewBox="0 0 16 16" fill="none" stroke="#8c8c8c" stroke-width="1.6" stroke-linecap="round" stroke-linejoin="round" ><rect x="1.75" y="2.75" width="12.5" height="11.5" rx="2.6"/><path d="M1.9 7.1 H14.1" stroke-linecap="butt"/><path d="M5.05 1.55 V4.3 M10.95 1.55 V4.3"/></svg>
<span class="t" style="left:1374.60px;top:538.99px;font-size:26px;line-height:26px;color:#262626;">Date and time</span>
<div style="left:1725px;top:525px;width:299px;height:55.5px;background:#cbe6e0;border-radius:12px;"></div>
<span class="t" style="left:1744.20px;top:538.99px;font-size:26px;line-height:26px;color:#262626;letter-spacing:1.024px;">No</span>
<span class="t" style="left:36.10px;top:609.99px;font-size:26px;line-height:26px;color:#262626;letter-spacing:-0.730px;">11</span>
<span class="t" style="left:117.60px;top:610.99px;font-size:26px;line-height:26px;color:#262626;letter-spacing:0.138px;">Discount</span>
<span class="t" style="left:590.30px;top:610.99px;font-size:26px;line-height:26px;color:#262626;letter-spacing:-0.501px;">MS_SalesFacts.Discount</span>
<svg style="position:absolute;left:1337px;top:612px" width="25" height="25" viewBox="0 0 16 16" fill="none" stroke="#8c8c8c" stroke-width="1.6" stroke-linecap="round" stroke-linejoin="round" ><path d="M6.5 2.15 L4.1 13.9 M12 2.15 L9.75 13.9 M2.8 5.57 H14.55 M1.5 10.6 H13.35"/></svg>
<span class="t" style="left:1374.60px;top:610.99px;font-size:26px;line-height:26px;color:#262626;letter-spacing:0.033px;">Fractional number</span>
<div style="left:1725px;top:597px;width:299px;height:55.5px;background:#e0f6e1;border-radius:12px;"></div>
<span class="t" style="left:1744.20px;top:610.99px;font-size:26px;line-height:26px;color:#262626;letter-spacing:1.024px;">No</span>
<span class="t" style="left:35.90px;top:753.99px;font-size:26px;line-height:26px;color:#262626;letter-spacing:-1.760px;">13</span>
<span class="t" style="left:117.60px;top:754.99px;font-size:26px;line-height:26px;color:#262626;letter-spacing:0.145px;">DeliveryAddressCoord</span>
<span class="t" style="left:590.30px;top:754.99px;font-size:26px;line-height:26px;color:#262626;letter-spacing:-0.320px;width:386.70px;overflow:hidden;">MS_SalesFacts.DeliveryAddressCoord</span>
<svg style="position:absolute;left:1337.1px;top:755.6px" width="25" height="25" viewBox="0 0 16 16" fill="none" stroke="#8c8c8c" stroke-width="1.7" stroke-linecap="round" stroke-linejoin="round" ><rect x="1.75" y="1.75" width="12.5" height="12.5" rx="2.6"/><path d="M5.6 5.45 H10.4 M8 5.6 V10.9"/></svg>
<span class="t" style="left:1374.70px;top:754.99px;font-size:26px;line-height:26px;color:#262626;letter-spacing:0.568px;">String</span>
<div style="left:1725px;top:741px;width:299px;height:55.5px;background:#e0f6e1;border-radius:12px;"></div>
<span class="t" style="left:1744.20px;top:754.99px;font-size:26px;line-height:26px;color:#262626;letter-spacing:1.024px;">No</span>
</div>
<div style="left:112px;top:264px;width:2418px;height:2px;background:#e5e5e5;"></div>
<svg style="position:absolute;left:2534px;top:205px" width="22" height="11"><path d="M0.5 10.5 L10.5 0.5 L20.5 10.5Z" fill="#e3e3e3"/></svg>
<svg style="position:absolute;left:2534px;top:1015px" width="22" height="11"><path d="M0.5 0.5 L10.5 10.5 L20.5 0.5Z" fill="#e3e3e3"/></svg>
<div style="left:2536px;top:280px;width:18px;height:337px;background:#e3e3e3;border-radius:9px;"></div>
<div style="left:142.5px;top:904.5px;width:2356.5px;height:103.5px;background:#5282ff;border-radius:21px;"></div>
<span class="t" style="left:181.20px;top:939.61px;font-size:30px;line-height:30px;color:#ffffff;font-weight:700;letter-spacing:-0.748px;">Fields selected </span>
<span class="t" style="left:393.20px;top:939.61px;font-size:30px;line-height:30px;color:#ffffff;font-weight:700;letter-spacing:-3.767px;">— 6</span>
<svg style="position:absolute;left:553px;top:941px" width="30.5" height="30.5" viewBox="0 0 16 16" fill="none" stroke="#ffffff" stroke-width="1.55" stroke-linecap="round" stroke-linejoin="round" ><path d="M1.8 3.9 H14.2"/><path d="M5.6 3.7 V2.9 A1.4 1.4 0 0 1 7 1.5 H9 A1.4 1.4 0 0 1 10.4 2.9 V3.7"/><path d="M3.2 4.2 L3.9 12.8 A1.9 1.9 0 0 0 5.8 14.5 H10.2 A1.9 1.9 0 0 0 12.1 12.8 L12.8 4.2"/><path d="M6.5 7 V11.4 M9.5 7 V11.4"/></svg>
<span class="t" style="left:600.70px;top:942.99px;font-size:26px;line-height:26px;color:#ffffff;letter-spacing:-0.079px;-webkit-text-stroke:0.35px #ffffff;">Delete</span>
<svg style="position:absolute;left:738.8px;top:941px" width="32" height="32" viewBox="0 0 16 16" fill="none" stroke="#ffffff" stroke-width="1.5" stroke-linecap="round" stroke-linejoin="round" ><path d="M0.95 8 C2.7 4.7 5.2 2.95 8 2.95 C10.8 2.95 13.3 4.7 15.05 8 C13.3 11.3 10.8 13.05 8 13.05 C5.2 13.05 2.7 11.3 0.95 8Z"/><circle cx="8" cy="8" r="2.3"/><path d="M4.0 1.6 L15.0 12.4" stroke="#5282ff" stroke-width="1.35" stroke-linecap="butt"/><path d="M2.6 2.6 L13.6 13.5"/></svg>
<span class="t" style="left:787.45px;top:942.99px;font-size:26px;line-height:26px;color:#ffffff;letter-spacing:0.512px;-webkit-text-stroke:0.35px #ffffff;">Hide</span>
<svg style="position:absolute;left:907px;top:941px" width="30.5" height="30.5" viewBox="0 0 16 16" fill="none" stroke="#ffffff" stroke-width="1.6" stroke-linecap="round" stroke-linejoin="round" ><path d="M10.6 2.3 A1.9 1.9 0 0 1 13.3 2.3 L13.7 2.7 A1.9 1.9 0 0 1 13.7 5.4 L6 13.1 L2 14.2 L2.9 10 Z"/><path d="M9.4 3.6 L12.4 6.6"/></svg>
<span class="t" style="left:954.20px;top:942.99px;font-size:26px;line-height:26px;color:#ffffff;letter-spacing:0.057px;-webkit-text-stroke:0.35px #ffffff;">Change type</span>
<svg style="position:absolute;left:1168px;top:941px" width="30.5" height="30.5" viewBox="0 0 16 16" fill="none" stroke="#ffffff" stroke-width="1.6" stroke-linecap="round" stroke-linejoin="round" ><path d="M10.6 2.3 A1.9 1.9 0 0 1 13.3 2.3 L13.7 2.7 A1.9 1.9 0 0 1 13.7 5.4 L6 13.1 L2 14.2 L2.9 10 Z"/><path d="M9.4 3.6 L12.4 6.6"/></svg>
<span class="t" style="left:1214.20px;top:942.99px;font-size:26px;line-height:26px;color:#ffffff;letter-spacing:0.125px;-webkit-text-stroke:0.35px #ffffff;">Change aggregation</span>
<svg style="position:absolute;left:2418px;top:943px" width="28" height="28" viewBox="0 0 16 16" fill="none" stroke="#ffffff" stroke-width="1.7" stroke-linecap="round" stroke-linejoin="round" ><path d="M3.25 3.25 L12.75 12.75 M12.75 3.25 L3.25 12.75"/></svg>
<div style="left:112px;top:1039px;width:2445px;height:1px;background:#e6e6e6;"></div>
<div style="left:112px;top:1040px;width:2445px;height:397px;background:#fafafa;"></div>
<span class="t" style="left:152.20px;top:1073.99px;font-size:26px;line-height:26px;color:#262626;font-weight:700;letter-spacing:-0.419px;">Preview</span>
<span class="t" style="left:328.70px;top:1073.99px;font-size:26px;line-height:26px;color:#262626;letter-spacing:0.343px;">Number of rows:</span>
<div style="left:542px;top:1060px;width:165px;height:55px;border:2px solid #dfdfdf;border-radius:12px;box-sizing:border-box;background:#fbfbfb"></div>
<span class="t" style="left:561.70px;top:1075.99px;font-size:26px;line-height:26px;color:#262626;letter-spacing:-2.160px;">10</span>
<span class="t" style="left:726.70px;top:1073.99px;font-size:26px;line-height:26px;color:#8c8c8c;letter-spacing:-0.142px;">maximum 1 000</span>
<svg style="position:absolute;left:2346px;top:1074px" width="28" height="28" viewBox="0 0 16 16" fill="none" stroke="#262626" stroke-width="1.6" stroke-linecap="round" stroke-linejoin="round" ><path d="M7.75 2.1 H13.95 V8.3"/><path d="M2.05 7.7 V13.9 H8.25"/></svg>
<svg style="position:absolute;left:2409px;top:1072px" width="32" height="32" viewBox="0 0 16 16" fill="none" stroke="#262626" stroke-width="1.55" stroke-linecap="round" stroke-linejoin="round" ><rect x="2.05" y="2.8" width="12.4" height="10.4" rx="2.9"/><path d="M11.1 2.9 V13.1"/></svg>
<svg style="position:absolute;left:2479px;top:1074px" width="28" height="28" viewBox="0 0 16 16" fill="none" stroke="#262626" stroke-width="1.7" stroke-linecap="round" stroke-linejoin="round" ><path d="M3.25 3.25 L12.75 12.75 M12.75 3.25 L3.25 12.75"/></svg>
<div style="left:2530px;top:1136px;width:27px;height:301px;background:#fff;"></div>
<div style="left:136px;top:1410px;width:2394px;height:27px;background:#fff;"></div>
<div style="left:136px;top:1136px;width:2394px;height:2px;background:#e6e6e6;"></div>
<div style="left:136px;top:1201px;width:2394px;height:2px;background:#e6e6e6;"></div>
<div style="left:136px;top:1265px;width:2394px;height:2px;background:#e6e6e6;"></div>
<div style="left:136px;top:1329px;width:2394px;height:2px;background:#e6e6e6;"></div>
<div style="left:136px;top:1393px;width:2394px;height:2px;background:#e6e6e6;"></div>
<div style="left:136px;top:1138px;width:2394px;height:272px;overflow:hidden">
<span class="t" style="left:21.70px;top:17.99px;font-size:26px;line-height:26px;color:#262626;-webkit-text-stroke:0.5px #262626;transform:scaleX(1.5);transform-origin:0 0;">#</span>
<span class="t" style="left:89.70px;top:17.99px;font-size:26px;line-height:26px;color:#262626;letter-spacing:0.229px;-webkit-text-stroke:0.6px #262626;">Доставка</span>
<span class="t" style="left:244.70px;top:17.99px;font-size:26px;line-height:26px;color:#262626;letter-spacing:0.281px;-webkit-text-stroke:0.6px #262626;">Самовывоз</span>
<span class="t" style="left:424.70px;top:17.99px;font-size:26px;line-height:26px;color:#262626;letter-spacing:0.519px;-webkit-text-stroke:0.6px #262626;">OrderID</span>
<span class="t" style="left:617.45px;top:17.99px;font-size:26px;line-height:26px;color:#262626;letter-spacing:0.336px;-webkit-text-stroke:0.6px #262626;">ClientID</span>
<span class="t" style="left:751.70px;top:17.99px;font-size:26px;line-height:26px;color:#262626;letter-spacing:0.684px;-webkit-text-stroke:0.6px #262626;">ProductID</span>
<span class="t" style="left:912.70px;top:17.99px;font-size:26px;line-height:26px;color:#262626;letter-spacing:0.171px;-webkit-text-stroke:0.6px #262626;">ShopID</span>
<span class="t" style="left:1039.70px;top:17.99px;font-size:26px;line-height:26px;color:#262626;letter-spacing:0.855px;-webkit-text-stroke:0.6px #262626;">OrderDatetime</span>
<span class="t" style="left:1330.45px;top:17.99px;font-size:26px;line-height:26px;color:#262626;letter-spacing:0.641px;-webkit-text-stroke:0.6px #262626;">OrderDate</span>
<span class="t" style="left:1504.70px;top:17.99px;font-size:26px;line-height:26px;color:#262626;letter-spacing:-0.858px;-webkit-text-stroke:0.6px #262626;">Year</span>
<span class="t" style="left:1600.20px;top:17.99px;font-size:26px;line-height:26px;color:#262626;letter-spacing:0.688px;-webkit-text-stroke:0.6px #262626;">DeliveryDatetime</span>
<span class="t" style="left:1890.20px;top:17.99px;font-size:26px;line-height:26px;color:#262626;letter-spacing:0.552px;-webkit-text-stroke:0.6px #262626;">Discount</span>
<span class="t" style="left:2035.70px;top:17.99px;font-size:26px;line-height:26px;color:#262626;letter-spacing:0.663px;-webkit-text-stroke:0.6px #262626;">ProductCount</span>
<span class="t" style="left:2243.45px;top:17.99px;font-size:26px;line-height:26px;color:#262626;letter-spacing:0.620px;-webkit-text-stroke:0.6px #262626;">DeliveryAddressCoord</span>
<span class="t" style="left:20.70px;top:81.99px;font-size:26px;line-height:26px;color:#262626;">1</span>
<span class="t" style="left:88.70px;top:81.99px;font-size:26px;line-height:26px;color:#262626;">0</span>
<span class="t" style="left:244.70px;top:81.99px;font-size:26px;line-height:26px;color:#262626;letter-spacing:-0.360px;">5845</span>
<span class="t" style="left:424.70px;top:81.99px;font-size:26px;line-height:26px;color:#262626;letter-spacing:-0.250px;">2018-585181</span>
<span class="t" style="left:618.45px;top:81.99px;font-size:26px;line-height:26px;color:#262626;letter-spacing:-1.264px;">TZeFc</span>
<span class="t" style="left:752.70px;top:81.99px;font-size:26px;line-height:26px;color:#262626;letter-spacing:0.521px;">prd-38</span>
<span class="t" style="left:913.70px;top:81.99px;font-size:26px;line-height:26px;color:#262626;letter-spacing:0.163px;">sp-11</span>
<span class="t" style="left:1039.70px;top:81.99px;font-size:26px;line-height:26px;color:#262626;letter-spacing:0.037px;">2018-10-02T07:39:00</span>
<span class="t" style="left:1330.45px;top:81.99px;font-size:26px;line-height:26px;color:#262626;">2018-10-02</span>
<span class="t" style="left:1503.70px;top:81.99px;font-size:26px;line-height:26px;color:#262626;letter-spacing:-0.293px;">2018</span>
<span class="t" style="left:1601.20px;top:81.99px;font-size:26px;line-height:26px;color:#262626;letter-spacing:-0.024px;">1970-01-01T00:00:00</span>
<span class="t" style="left:1891.20px;top:81.99px;font-size:26px;line-height:26px;color:#262626;letter-spacing:-0.042px;">0.0</span>
<span class="t" style="left:2036.70px;top:81.99px;font-size:26px;line-height:26px;color:#262626;">1</span>
<span class="t" style="left:2244.45px;top:81.99px;font-size:26px;line-height:26px;color:#262626;">[55.79908789,37.53836729]</span>
<span class="t" style="left:20.70px;top:145.99px;font-size:26px;line-height:26px;color:#262626;">2</span>
<span class="t" style="left:88.70px;top:145.99px;font-size:26px;line-height:26px;color:#262626;">0</span>
<span class="t" style="left:244.70px;top:145.99px;font-size:26px;line-height:26px;color:#262626;letter-spacing:-0.193px;">1356</span>
<span class="t" style="left:424.70px;top:145.99px;font-size:26px;line-height:26px;color:#262626;letter-spacing:-0.250px;">2018-012241</span>
<span class="t" style="left:618.45px;top:145.99px;font-size:26px;line-height:26px;color:#262626;letter-spacing:-1.537px;">47CJo</span>
<span class="t" style="left:752.70px;top:145.99px;font-size:26px;line-height:26px;color:#262626;letter-spacing:0.521px;">prd-40</span>
<span class="t" style="left:913.70px;top:145.99px;font-size:26px;line-height:26px;color:#262626;letter-spacing:-0.070px;">sp-15</span>
<span class="t" style="left:1039.70px;top:145.99px;font-size:26px;line-height:26px;color:#262626;letter-spacing:0.037px;">2018-02-06T09:21:00</span>
<span class="t" style="left:1330.45px;top:145.99px;font-size:26px;line-height:26px;color:#262626;">2018-02-06</span>
<span class="t" style="left:1503.70px;top:145.99px;font-size:26px;line-height:26px;color:#262626;letter-spacing:-0.293px;">2018</span>
<span class="t" style="left:1601.20px;top:145.99px;font-size:26px;line-height:26px;color:#262626;letter-spacing:-0.024px;">1970-01-01T00:00:00</span>
<span class="t" style="left:1891.20px;top:145.99px;font-size:26px;line-height:26px;color:#262626;letter-spacing:-0.042px;">0.0</span>
<span class="t" style="left:2037.70px;top:145.99px;font-size:26px;line-height:26px;color:#262626;">3</span>
<span class="t" style="left:2244.45px;top:145.99px;font-size:26px;line-height:26px;color:#262626;">[55.85367755,37.47691254]</span>
<span class="t" style="left:21.70px;top:209.99px;font-size:26px;line-height:26px;color:#262626;">3</span>
<span class="t" style="left:88.70px;top:209.99px;font-size:26px;line-height:26px;color:#262626;">0</span>
<span class="t" style="left:244.70px;top:209.99px;font-size:26px;line-height:26px;color:#262626;letter-spacing:-1.160px;">85</span>
<span class="t" style="left:424.70px;top:209.99px;font-size:26px;line-height:26px;color:#262626;letter-spacing:-0.200px;">2017-176654</span>
<span class="t" style="left:616.45px;top:209.99px;font-size:26px;line-height:26px;color:#262626;letter-spacing:-0.757px;">R2bFr</span>
<span class="t" style="left:752.70px;top:209.99px;font-size:26px;line-height:26px;color:#262626;letter-spacing:0.521px;">prd-22</span>
<span class="t" style="left:913.70px;top:209.99px;font-size:26px;line-height:26px;color:#262626;letter-spacing:-0.320px;">sp-21</span>
<span class="t" style="left:1039.70px;top:209.99px;font-size:26px;line-height:26px;color:#262626;letter-spacing:0.037px;">2017-06-04T15:00:00</span>
<span class="t" style="left:1330.45px;top:209.99px;font-size:26px;line-height:26px;color:#262626;letter-spacing:-0.054px;">2017-06-04</span>
<span class="t" style="left:1503.70px;top:209.99px;font-size:26px;line-height:26px;color:#262626;letter-spacing:-0.360px;">2017</span>
<span class="t" style="left:1601.20px;top:209.99px;font-size:26px;line-height:26px;color:#262626;letter-spacing:-0.024px;">1970-01-01T00:00:00</span>
<span class="t" style="left:1891.20px;top:209.99px;font-size:26px;line-height:26px;color:#262626;letter-spacing:-0.042px;">0.0</span>
<span class="t" style="left:2036.70px;top:209.99px;font-size:26px;line-height:26px;color:#262626;">1</span>
<span class="t" style="left:2244.45px;top:209.99px;font-size:26px;line-height:26px;color:#262626;">[55.76863874,37.61542391]</span>
</div>
<svg style="position:absolute;left:2534px;top:1149px" width="22" height="11"><path d="M0.5 10.5 L10.5 0.5 L20.5 10.5Z" fill="#e3e3e3"/></svg>
<svg style="position:absolute;left:2534px;top:1385.5px" width="22" height="11"><path d="M0.5 0.5 L10.5 10.5 L20.5 0.5Z" fill="#e3e3e3"/></svg>
<div style="left:2536px;top:1173px;width:17.5px;height:76.5px;background:#e3e3e3;border-radius:9px;"></div>
<svg style="position:absolute;left:147px;top:1415px" width="12" height="21"><path d="M11.5 0.5 V20.5 L0.5 10.5Z" fill="#e3e3e3"/></svg>
<svg style="position:absolute;left:2507px;top:1414px" width="12" height="21"><path d="M0.5 0.5 V20.5 L11.5 10.5Z" fill="#e3e3e3"/></svg>
<div style="left:172.5px;top:1416px;width:45px;height:17px;background:#e3e3e3;border-radius:9px;"></div>
<div id="frame"></div>
</div></body></html>
